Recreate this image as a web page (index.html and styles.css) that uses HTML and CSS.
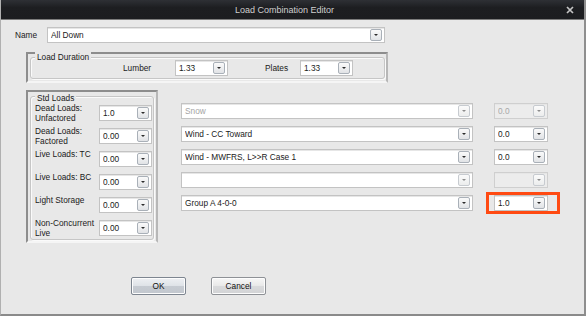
FILE: index.html
```html
<!DOCTYPE html>
<html>
<head>
<meta charset="utf-8">
<link rel="stylesheet" href="styles.css">
</head>
<body>
<div class="window">
  <div class="titlebar">
    <div class="title">Load Combination Editor</div>
    <div class="close"><svg width="8" height="8" viewBox="0 0 8 8"><path d="M1 1L7 7M7 1L1 7" stroke="#c4c4c4" stroke-width="1.7" fill="none"/></svg></div>
  </div>
  <div class="content">
    <div class="name-row">
      <span class="name-label">Name</span>
      <div class="combo combo-name"><span class="val">All Down</span><span class="btn"></span></div>
    </div>

    <div class="frame frame-duration">
      <div class="group group-duration">
        <span class="legend">Load Duration</span>
        <span class="dur-label lumber">Lumber</span>
        <div class="combo combo-small"><span class="val">1.33</span><span class="btn"></span></div>
        <span class="dur-label plates">Plates</span>
        <div class="combo combo-small"><span class="val">1.33</span><span class="btn"></span></div>
      </div>
    </div>

    <div class="main">
      <div class="frame frame-std">
        <div class="group group-std">
          <span class="legend">Std Loads</span>
          <div class="std-grid">
            <span class="std-label">Dead Loads:<br>Unfactored</span>
            <div class="combo combo-small"><span class="val">1.0</span><span class="btn"></span></div>
            <span class="std-label">Dead Loads:<br>Factored</span>
            <div class="combo combo-small"><span class="val">0.00</span><span class="btn"></span></div>
            <span class="std-label">Live Loads: TC</span>
            <div class="combo combo-small"><span class="val">0.00</span><span class="btn"></span></div>
            <span class="std-label">Live Loads: BC</span>
            <div class="combo combo-small"><span class="val">0.00</span><span class="btn"></span></div>
            <span class="std-label">Light Storage</span>
            <div class="combo combo-small"><span class="val">0.00</span><span class="btn"></span></div>
            <span class="std-label">Non-Concurrent<br>Live</span>
            <div class="combo combo-small"><span class="val">0.00</span><span class="btn"></span></div>
          </div>
        </div>
      </div>

      <div class="cases">
        <div class="case-row">
          <div class="combo combo-case disabled-text"><span class="val">Snow</span><span class="btn btn-dim"></span></div>
          <div class="combo combo-factor disabled"><span class="val">0.0</span><span class="btn btn-dim"></span></div>
        </div>
        <div class="case-row">
          <div class="combo combo-case"><span class="val">Wind - CC Toward</span><span class="btn"></span></div>
          <div class="combo combo-factor"><span class="val">0.0</span><span class="btn"></span></div>
        </div>
        <div class="case-row">
          <div class="combo combo-case"><span class="val">Wind - MWFRS, L&gt;&gt;R Case 1</span><span class="btn"></span></div>
          <div class="combo combo-factor"><span class="val">0.0</span><span class="btn"></span></div>
        </div>
        <div class="case-row">
          <div class="combo combo-case"><span class="val"></span><span class="btn btn-dim"></span></div>
          <div class="combo combo-factor disabled"><span class="val"></span><span class="btn btn-dim"></span></div>
        </div>
        <div class="case-row">
          <div class="combo combo-case"><span class="val">Group A 4-0-0</span><span class="btn"></span></div>
          <div class="factor-wrap">
            <div class="combo combo-factor"><span class="val">1.0</span><span class="btn"></span></div>
            <div class="highlight"></div>
          </div>
        </div>
      </div>
    </div>

    <div class="buttons">
      <button class="button button-ok">OK</button>
      <button class="button">Cancel</button>
    </div>
  </div>
</div>
</body>
</html>
```

FILE: styles.css
```css
* { box-sizing: border-box; }

html, body {
  margin: 0;
  padding: 0;
  width: 586px;
  height: 316px;
  overflow: hidden;
  background: #e8e8e8;
  font-family: "Liberation Sans", Arial, sans-serif;
  font-size: 8.3px;
  color: #1a1a1a;
}

.window {
  width: 586px;
  height: 316px;
  display: flex;
  flex-direction: column;
  background: #e8e8e8;
  border-right: 2px solid #8e8e8e;
  border-bottom: 2px solid #8a8a8a;
  border-left: 1px solid #b0b0b0;
}

.titlebar {
  height: 20px;
  flex: none;
  display: grid;
  grid-template-columns: 1fr 22px;
  align-items: center;
  background: linear-gradient(#2e3035, #1d1e21 40%, #1c1d20);
  border-bottom: 1px solid #7c7c7c;
}

.title {
  text-align: center;
  padding-left: 6px;
  color: #cfcfcf;
  font-size: 9px;
}

.close {
  display: flex;
  align-items: center;
  justify-content: flex-start;
  padding-left: 4px;
}

.content {
  flex: 1;
  padding-left: 14px;
}

.name-row {
  display: flex;
  align-items: center;
  margin-top: 7px;
  height: 16px;
}

.name-label {
  width: 32px;
}

/* combo boxes */
.combo {
  display: flex;
  align-items: center;
  height: 16px;
  background: #fff;
  border: 1px solid #c3c3c3;
  box-shadow: inset 0 1px 0 #e6e6e6;
  padding-left: 3px;
}

.combo .val {
  flex: 1;
  white-space: nowrap;
  overflow: hidden;
}

.btn {
  width: 12px;
  height: 12px;
  margin-right: 2px;
  border: 1px solid #a9b0b8;
  border-radius: 2px;
  background: linear-gradient(#fafafa, #e1e3e6);
  display: flex;
  align-items: center;
  justify-content: center;
}

.btn::after {
  content: "";
  width: 0;
  height: 0;
  border-left: 2px solid transparent;
  border-right: 2px solid transparent;
  border-top: 2px solid #2b2b2b;
}

.btn-dim {
  border-color: #c7cbd0;
  background: linear-gradient(#fbfbfb, #eceded);
}

.btn-dim::after {
  border-top-color: #8c8c8c;
}

.combo-name { width: 338px; }
.combo-small { width: 53px; }
.combo-case { width: 292px; }
.combo-factor { width: 54px; }

.disabled-text .val { color: #a4a4a4; }

.disabled {
  background: #ececec;
  border-color: #cfcfcf;
}

.disabled .val { color: #a8a8a8; }

/* group frames */
.frame {
  border-style: solid;
  border-width: 2px;
  border-color: #8d8d8d #b7b7b7 #f5f5f5 #8d8d8d;
  margin-left: 11px;
}

.group {
  position: relative;
  border: 1px solid #c6c6c6;
  border-radius: 3px;
  box-shadow: inset 1px 1px 0 #fafafa, 1px 1px 0 #fafafa;
}

.legend {
  position: absolute;
  top: -6px;
  left: 4px;
  padding: 0 2px;
  background: #e8e8e8;
  line-height: 10px;
}

.frame-duration {
  width: 362px;
  height: 31px;
  margin-top: 9px;
}

.group-duration {
  margin: 3px 1px 0 2px;
  height: 22px;
  display: flex;
  align-items: flex-start;
  padding-top: 2px;
}

.dur-label {
  line-height: 16px;
}

.lumber {
  margin-left: 92px;
  width: 52px;
}

.plates {
  margin-left: 37px;
  width: 35px;
}

.main {
  display: flex;
  align-items: flex-start;
  margin-top: 7px;
}

.frame-std {
  width: 132px;
  height: 153px;
}

.group-std {
  margin: 4px 2px 0 2px;
  height: 144px;
  padding: 8px 0 0 4px;
}

.group-std .legend {
  top: -4px;
}

.std-grid {
  display: grid;
  grid-template-columns: 64px 53px;
  grid-template-rows: repeat(5, 23px) 20px;
  align-items: start;
}

.std-label {
  line-height: 9.6px;
  margin-top: -1px;
}

.cases {
  margin-left: 23px;
  margin-top: 13px;
  display: flex;
  flex-direction: column;
  gap: 7px;
}

.case-row {
  display: flex;
  gap: 21px;
}

.factor-wrap {
  position: relative;
}

.highlight {
  position: absolute;
  left: -8px;
  top: -3px;
  right: -12px;
  bottom: -3px;
  border: 3px solid #ff4a12;
}

.buttons {
  display: flex;
  gap: 25px;
  margin-top: 34px;
  padding-left: 116px;
}

.button {
  width: 55px;
  height: 18px;
  padding: 0;
  font-family: "Liberation Sans", Arial, sans-serif;
  font-size: 8.3px;
  color: #111;
  border: 1px solid #8e9196;
  border-radius: 2px;
  background: linear-gradient(#f7f7f7, #e9e9e9 48%, #d9dadc 52%, #d2d3d5);
  box-shadow: inset 0 0 0 1px #fdfdfd;
}

.button-ok {
  background: linear-gradient(#eef0f3, #dfe3e8 48%, #c6cbd2 52%, #c2c7ce);
  border-color: #7d8590;
}
```
